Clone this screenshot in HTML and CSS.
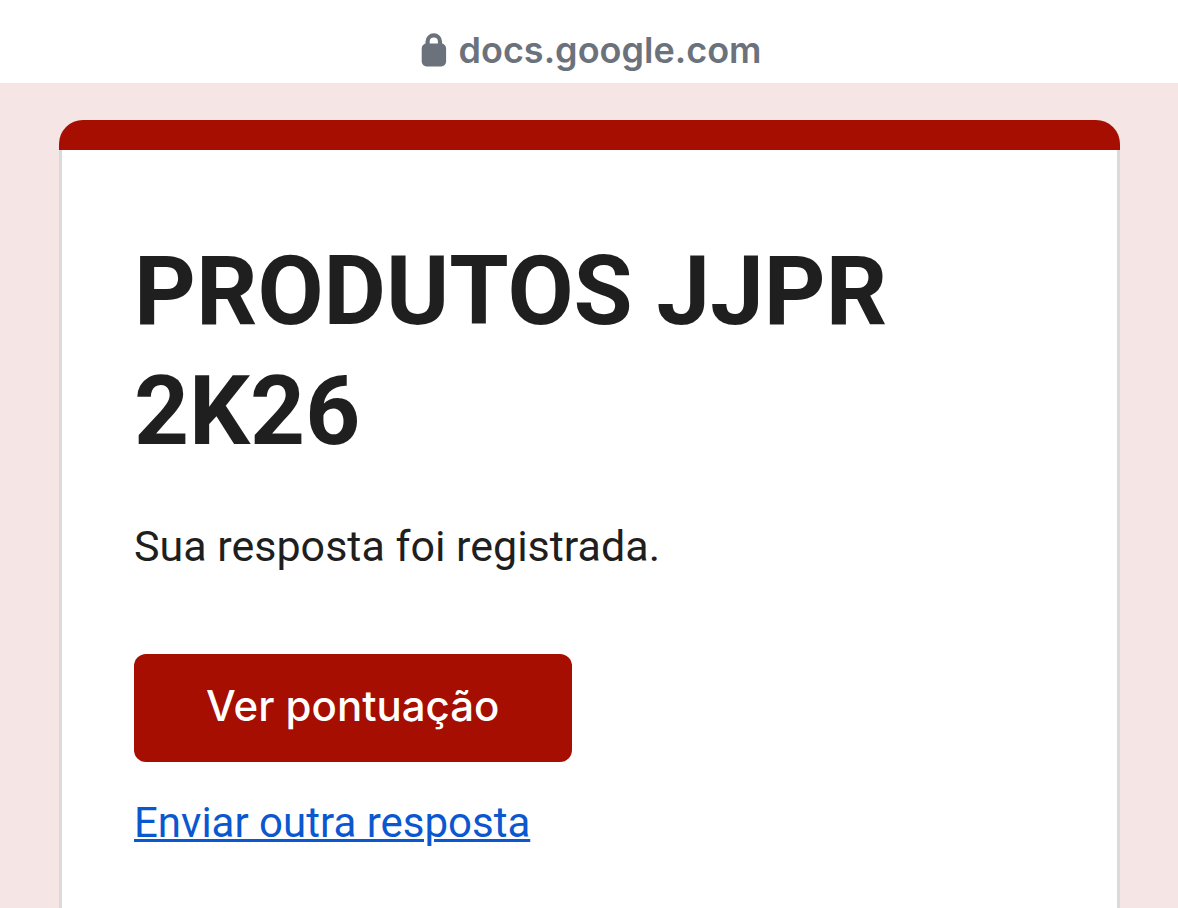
FILE: index.html
```
<!DOCTYPE html>
<html lang="pt-BR">
  <head>
    <meta charset="utf-8">
    <meta name="viewport" content="width=device-width, initial-scale=1">
    <title>PRODUTOS JJPR 2K26</title>
    <link rel="stylesheet" href="styles.css">
  </head>
  <body>
    <header class="address-bar">
      <svg class="lock" viewBox="0 0 26 34" aria-hidden="true">
        <path d="M6.6 14V8.6a6.2 6.2 0 0 1 12.4 0V14" fill="none" stroke="currentColor" stroke-width="4.2" />
        <rect x="0.7" y="10.6" width="24.4" height="22.8" rx="4.8" fill="currentColor" />
      </svg>
      <span>docs.google.com</span>
    </header>
    <main class="page">
      <div class="card">
        <div class="card-stripe"></div>
        <div class="card-body">
          <h1>PRODUTOS JJPR 2K26</h1>
          <p class="message">Sua resposta foi registrada.</p>
          <button class="score-button" type="button">Ver pontuação</button>
          <a class="again-link" href="#">Enviar outra resposta</a>
        </div>
      </div>
    </main>
  </body>
</html>
```
FILE: styles.css
```
* {
  box-sizing: border-box;
}

body {
  margin: 0;
  min-height: 100vh;
  display: flex;
  flex-direction: column;
  background-color: #f5e6e5;
  color: #1f1f1f;
  font-family: Roboto, sans-serif;
}

.address-bar {
  display: flex;
  justify-content: center;
  align-items: center;
  gap: 12px;
  padding: 19px 0 2px 4px;
  background-color: #fff;
  color: #6b727c;
  font-family: Inter, sans-serif;
  font-size: 36px;
  font-weight: 600;
  line-height: 62px;
}

.lock {
  width: 26px;
  height: 34px;
}

.page {
  flex: 1;
  display: flex;
  padding: 37px 58px 0 59px;
}

.card {
  flex: 1;
  display: flex;
  flex-direction: column;
}

.card-stripe {
  height: 30px;
  background-color: #a50e00;
  border-radius: 24px 24px 0 0;
}

.card-body {
  flex: 1;
  display: flex;
  flex-direction: column;
  align-items: flex-start;
  padding: 81px 72px 40px;
  background-color: #fff;
  border: solid #dadada;
  border-width: 0 3px;
}

h1 {
  margin: 0;
  font-size: 96px;
  font-weight: 700;
  line-height: 120px;
}

.message {
  margin: 45px 0 0;
  font-size: 43px;
  line-height: 60px;
}

.score-button {
  margin-top: 78px;
  padding: 0 72px 4px;
  border: 0;
  border-radius: 12px;
  background-color: #a50e00;
  color: #fff;
  font-family: Inter, sans-serif;
  font-size: 42px;
  font-weight: 500;
  line-height: 104px;
  cursor: pointer;
}

.again-link {
  margin-top: 31px;
  color: #0b57d0;
  font-size: 42px;
  line-height: 60px;
  text-decoration-thickness: 3px;
}
```
